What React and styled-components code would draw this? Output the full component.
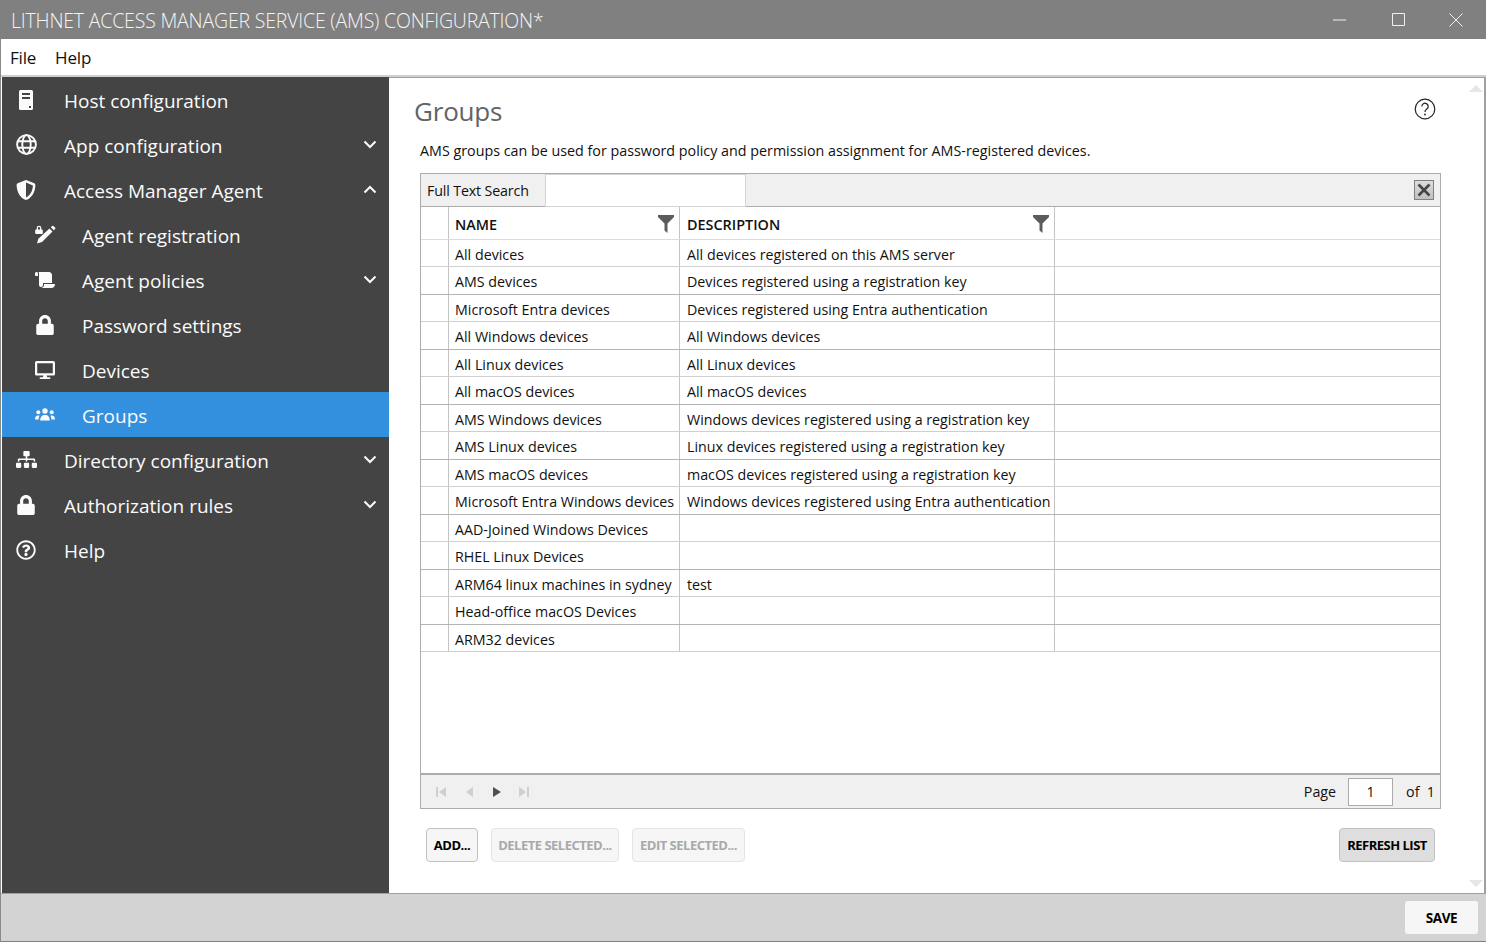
import React from "react";
import styled, { createGlobalStyle } from "styled-components";
import { FaShieldAlt, FaScroll, FaLock, FaDesktop, FaSitemap, FaRegQuestionCircle } from "react-icons/fa";

const GlobalStyle = createGlobalStyle`
    html, body {
        margin: 0;
        height: 100%;
        overflow: hidden;
        background: #fff;
        font-family: "Open Sans", "Noto Sans", sans-serif;
    }
    * { box-sizing: border-box; }
`;

const Window = styled.div`
    display: flex;
    flex-direction: column;
    width: 1486px;
    height: 942px;
    border-left: 1px solid #8a8a8a;
    border-bottom: 1px solid #808080;
`;

const TitleBar = styled.div`
    display: flex;
    align-items: center;
    height: 39px;
    margin-left: -1px;
    padding: 0 1px 0 11px;
    background: #808080;
    color: #f4f4f4;
    font-size: 19.5px;
    font-weight: 300;
    letter-spacing: -0.19px;
    white-space: nowrap;
`;

const TitleText = styled.span`
    flex: 1;
    padding-top: 2px;
`;

const WinButton = styled.div`
    display: flex;
    align-items: center;
    justify-content: center;
    width: 58px;
    height: 39px;
    svg { display: block; }
`;

const MenuBar = styled.div`
    display: flex;
    align-items: center;
    gap: 19px;
    height: 38px;
    padding-left: 9px;
    background: #fff;
    border-bottom: 2px solid #d0d0d0;
    font-size: 17px;
    letter-spacing: -0.2px;
    color: #111;
`;

const Body = styled.div`
    flex: 1;
    display: flex;
    min-height: 0;
`;

const Sidebar = styled.nav`
    width: 387px;
    margin-left: 1px;
    background: #444444;
    flex: none;
`;

const NavItem = styled.div`
    display: flex;
    align-items: center;
    height: 45px;
    padding-left: ${props => (props.$sub ? 19 : 0)}px;
    background: ${props => (props.$active ? "#3390df" : "transparent")};
    color: #fbfbfb;
    font-size: 19px;
`;

const NavIcon = styled.span`
    display: flex;
    align-items: center;
    justify-content: center;
    width: 48px;
    margin-right: ${props => (props.$sub ? 13 : 14)}px;
    font-size: ${props => props.$size || 20}px;
`;

const NavLabel = styled.span`
    flex: 1;
    padding-top: 2px;
`;

const Chevron = styled.svg`
    width: 14px;
    height: 9px;
    margin-right: 12px;
`;

const Panel = styled.main`
    flex: 1;
    position: relative;
    display: flex;
    flex-direction: column;
    padding: 0 43px 0 25px;
    background: #fff;
    border-top: 1px solid #a0a0a0;
    border-right: 2px solid #a0a0a0;
    min-width: 0;
`;

const ScrollArrow = styled.div`
    position: absolute;
    right: 1px;
    ${props => (props.$down ? "bottom: 6px;" : "top: 7px;")}
    width: 0;
    height: 0;
    border-left: 7px solid transparent;
    border-right: 7px solid transparent;
    ${props => (props.$down ? "border-top" : "border-bottom")}: 7px solid #e6e6e6;
`;

const HeaderRow = styled.div`
    display: flex;
    align-items: center;
    justify-content: space-between;
    height: 62px;
    padding-right: 5px;
`;

const Heading = styled.h1`
    margin: 4px 0 0;
    font-size: 26px;
    font-weight: 400;
    letter-spacing: -0.2px;
    color: #606468;
`;

const HelpIcon = styled.svg`
    width: 22px;
    height: 22px;
`;

const Intro = styled.p`
    margin: 0 0 12px 6px;
    height: 21px;
    line-height: 21px;
    font-size: 14.3px;
    color: #111;
    white-space: nowrap;
`;

const Grid = styled.div`
    margin-left: 6px;
    width: 1021px;
    height: 636px;
    display: flex;
    flex-direction: column;
    border: 1px solid #ababab;
    font-size: 14.25px;
    color: #111;
`;

const SearchBar = styled.div`
    display: flex;
    align-items: center;
    height: 33px;
    flex: none;
    background: #f0f0f0;
    border-bottom: 1px solid #ababab;
`;

const SearchLabel = styled.span`
    width: 124px;
    padding-left: 6px;
    letter-spacing: -0.15px;
`;

const SearchInput = styled.div`
    width: 201px;
    height: 33px;
    background: #fff;
    border: 1px solid #d4d4d4;
`;

const ClearButton = styled.button`
    display: flex;
    align-items: center;
    justify-content: center;
    width: 20px;
    height: 20px;
    padding: 0;
    margin-left: auto;
    margin-right: 6px;
    background: linear-gradient(#dcdcdc, #c0c0c0);
    border: 1px solid #808080;
`;

const Columns = styled.div`
    display: grid;
    grid-template-columns: 28px 231px 375px 1fr;
    flex: none;
    height: ${props => props.$height}px;
    border-bottom: 1px solid ${props => props.$line};
`;

const Cell = styled.div`
    display: flex;
    align-items: center;
    padding: 2px 0 0 6px;
    border-right: 1px solid #c4c4c4;
    white-space: nowrap;
    overflow: hidden;
    &:nth-child(3) { padding-left: 7px; }
    &:last-child { border-right: 0; }
`;

const HeadCell = styled(Cell)`
    justify-content: space-between;
    padding-right: 5px;
    font-size: 14.4px;
    font-weight: 600;
`;

const Rows = styled.div`
    flex: 1;
    min-height: 0;
`;

const Pager = styled.div`
    display: flex;
    align-items: center;
    height: 35px;
    flex: none;
    padding-left: 14px;
    background: #f0f0f0;
    border-top: 2px solid #ababab;
`;

const PagerIcons = styled.div`
    display: flex;
    gap: 13.5px;
    flex: 1;
`;

const PagerIcon = styled.svg`
    display: block;
    width: 14px;
    height: 12px;
`;

const PageInput = styled.div`
    display: flex;
    align-items: center;
    justify-content: center;
    width: 45px;
    height: 28px;
    margin: 0 13px 0 12px;
    background: #fff;
    border: 1px solid #ababab;
`;

const PagerText = styled.span`
    margin-right: ${props => props.$right || 0}px;
`;

const Actions = styled.div`
    display: flex;
    gap: 13px;
    margin: 19px 0 0 12px;
    width: 1009px;
`;

const Action = styled.button`
    height: 34px;
    width: ${props => props.$width}px;
    padding: 0;
    margin-left: ${props => (props.$push ? "auto" : 0)};
    background: ${props => (props.$filled ? "#dedede" : "#f6f6f6")};
    border: 1px solid ${props => (props.$disabled ? "#e4e4e4" : "#c2c2c2")};
    border-radius: 4px;
    color: ${props => (props.$disabled ? "#a9a9a9" : "#000")};
    font-family: inherit;
    font-size: 13px;
    font-weight: 700;
    letter-spacing: -0.5px;
`;

const Footer = styled.div`
    display: flex;
    align-items: center;
    justify-content: flex-end;
    height: 48px;
    flex: none;
    padding-right: 8px;
    background: #d3d3d3;
    border-top: 1px solid #a0a0a0;
`;

const SaveButton = styled.button`
    width: 73px;
    height: 33px;
    padding: 0;
    background: #f6f6f6;
    border: 0;
    border-radius: 3px;
    color: #000;
    font-family: inherit;
    font-size: 13.5px;
    font-weight: 700;
    letter-spacing: -0.4px;
`;

const ServerIcon = () => (
    <svg width="14" height="20" viewBox="0 0 14 20">
        <path fill="#fbfbfb" fillRule="evenodd" d="M1.5 0h11A1.5 1.5 0 0 1 14 1.5v17a1.5 1.5 0 0 1-1.5 1.5h-11A1.5 1.5 0 0 1 0 18.5v-17A1.5 1.5 0 0 1 1.5 0zM3 3v2h8V3H3zm0 4v2h8V7H3zm7 9v2h2v-2h-2z" />
    </svg>
);

const GlobeIcon = () => (
    <svg width="21" height="21" viewBox="0 0 21 21" fill="none" stroke="#fbfbfb" strokeWidth="1.900">
        <circle cx="10.500" cy="10.500" r="9.400" />
        <ellipse cx="10.500" cy="10.500" rx="4.200" ry="9.400" />
        <path d="M1.800 7.300h17.400M1.800 13.700h17.400" />
    </svg>
);

const PenLockIcon = () => (
    <svg width="21" height="19" viewBox="0 0 21 19">
        <path fill="#fbfbfb" d="M14.5 3.5l3 3L7 17l-5 1.500 1.300-4.800zM15.800 2.200l1.300-1.200a1 1 0 0 1 1.400 0l1.600 1.600a1 1 0 0 1 0 1.400L18.800 5.200z" />
        <path fill="#fbfbfb" fillRule="evenodd" d="M1 4.500h.700V3a2.300 2.300 0 0 1 4.600 0v1.500H7a.8.8 0 0 1 .8.800v3a.8.8 0 0 1-.8.8H1a.8.8 0 0 1-.8-.8v-3a.8.8 0 0 1 .8-.8zM3 4.500h2V3a1 1 0 0 0-2 0z" />
    </svg>
);

const GroupIcon = () => (
    <svg width="20" height="13" viewBox="0 0 20 13" fill="#fbfbfb">
        <circle cx="10" cy="3" r="2.700" />
        <circle cx="3.300" cy="4.300" r="2" />
        <circle cx="16.700" cy="4.300" r="2" />
        <path d="M5.200 12.500c0-3.500 1.800-5.500 4.800-5.500s4.800 2 4.800 5.500zM0 11.500c0-2.400 1.100-4 3.300-4 .5 0 .9.100 1.300.3-.7 1-1 2.300-1 3.700zM20 11.500c0-2.400-1.100-4-3.300-4-.5 0-.9.100-1.300.3.7 1 1 2.300 1 3.700z" />
    </svg>
);

const FilterIcon = () => (
    <svg width="16" height="18" viewBox="0 0 16 18">
        <path fill="#5c5c5c" d="M0 0h16v2L9.500 8.500V18l-3-2.500V8.500L0 2z" />
    </svg>
);

const Down = () => (
    <Chevron viewBox="0 0 14 9">
        <path d="M1.500 1.500L7 7l5.500-5.500" fill="none" stroke="#fbfbfb" strokeWidth="2" />
    </Chevron>
);

const Up = () => (
    <Chevron viewBox="0 0 14 9">
        <path d="M1.500 7.500L7 2l5.500 5.500" fill="none" stroke="#fbfbfb" strokeWidth="2" />
    </Chevron>
);

const navItems = [
    { label: "Host configuration", icon: <ServerIcon /> },
    { label: "App configuration", icon: <GlobeIcon />, arrow: "down" },
    { label: "Access Manager Agent", icon: <FaShieldAlt />, size: 20, arrow: "up" },
    { label: "Agent registration", icon: <PenLockIcon />, sub: true },
    { label: "Agent policies", icon: <FaScroll />, size: 20, sub: true, arrow: "down" },
    { label: "Password settings", icon: <FaLock />, size: 20, sub: true },
    { label: "Devices", icon: <FaDesktop />, size: 20, sub: true },
    { label: "Groups", icon: <GroupIcon />, sub: true, active: true },
    { label: "Directory configuration", icon: <FaSitemap />, size: 21, arrow: "down" },
    { label: "Authorization rules", icon: <FaLock />, size: 20, arrow: "down" },
    { label: "Help", icon: <FaRegQuestionCircle />, size: 20 },
];

const groups = [
    ["All devices", "All devices registered on this AMS server"],
    ["AMS devices", "Devices registered using a registration key"],
    ["Microsoft Entra devices", "Devices registered using Entra authentication"],
    ["All Windows devices", "All Windows devices"],
    ["All Linux devices", "All Linux devices"],
    ["All macOS devices", "All macOS devices"],
    ["AMS Windows devices", "Windows devices registered using a registration key"],
    ["AMS Linux devices", "Linux devices registered using a registration key"],
    ["AMS macOS devices", "macOS devices registered using a registration key"],
    ["Microsoft Entra Windows devices", "Windows devices registered using Entra authentication"],
    ["AAD-Joined Windows Devices", ""],
    ["RHEL Linux Devices", ""],
    ["ARM64 linux machines in sydney", "test"],
    ["Head-office macOS Devices", ""],
    ["ARM32 devices", ""],
];

function App() {
    return (
        <Window>
            <GlobalStyle />
            <TitleBar>
                <TitleText>LITHNET ACCESS MANAGER SERVICE (AMS) CONFIGURATION*</TitleText>
                <WinButton>
                    <svg width="14" height="2" viewBox="0 0 14 2"><path d="M0 1h13" stroke="#f0f0f0" /></svg>
                </WinButton>
                <WinButton>
                    <svg width="13" height="13" viewBox="0 0 13 13"><path d="M.5.5h12v12H.5z" fill="none" stroke="#f0f0f0" /></svg>
                </WinButton>
                <WinButton>
                    <svg width="14" height="14" viewBox="0 0 14 14"><path d="M.5.5l13 13M13.500.5l-13 13" fill="none" stroke="#f0f0f0" /></svg>
                </WinButton>
            </TitleBar>
            <MenuBar>
                <span>File</span>
                <span>Help</span>
            </MenuBar>
            <Body>
                <Sidebar>
                    {navItems.map(item => (
                        <NavItem key={item.label} $sub={item.sub} $active={item.active}>
                            <NavIcon $sub={item.sub} $size={item.size}>{item.icon}</NavIcon>
                            <NavLabel>{item.label}</NavLabel>
                            {item.arrow === "down" && <Down />}
                            {item.arrow === "up" && <Up />}
                        </NavItem>
                    ))}
                </Sidebar>
                <Panel>
                    <ScrollArrow />
                    <ScrollArrow $down />
                    <HeaderRow>
                        <Heading>Groups</Heading>
                        <HelpIcon viewBox="0 0 22 22">
                            <circle cx="11" cy="11" r="9.800" fill="none" stroke="#222" strokeWidth="1.200" />
                            <path d="M7.800 8.500a3.200 3.200 0 1 1 5 2.600c-1.200.8-1.800 1.400-1.800 2.900" fill="none" stroke="#222" strokeWidth="1.200" />
                            <circle cx="11" cy="16.500" r=".9" fill="#222" />
                        </HelpIcon>
                    </HeaderRow>
                    <Intro>AMS groups can be used for password policy and permission assignment for AMS-registered devices.</Intro>
                    <Grid>
                        <SearchBar>
                            <SearchLabel>Full Text Search</SearchLabel>
                            <SearchInput />
                            <ClearButton aria-label="Clear">
                                <svg width="14" height="14" viewBox="0 0 14 14">
                                    <path d="M1.500 1.500l11 11M12.500 1.500l-11 11" stroke="#444" strokeWidth="2.600" />
                                </svg>
                            </ClearButton>
                        </SearchBar>
                        <Columns $height={33} $line="#dcdcdc">
                            <Cell />
                            <HeadCell>NAME<FilterIcon /></HeadCell>
                            <HeadCell>DESCRIPTION<FilterIcon /></HeadCell>
                            <Cell />
                        </Columns>
                        <Rows>
                            {groups.map(([name, description], i) => (
                                <Columns key={name} $height={i % 2 ? 28 : 27} $line={i % 2 ? "#b4b4b4" : "#cfcfcf"}>
                                    <Cell />
                                    <Cell>{name}</Cell>
                                    <Cell>{description}</Cell>
                                    <Cell />
                                </Columns>
                            ))}
                        </Rows>
                        <Pager>
                            <PagerIcons>
                                <PagerIcon viewBox="0 0 14 12"><path fill="#cfcfcf" d="M1 1h2v10H1zM11 1v10L4 6z" /></PagerIcon>
                                <PagerIcon viewBox="0 0 14 12"><path fill="#cfcfcf" d="M10 1v10L3 6z" /></PagerIcon>
                                <PagerIcon viewBox="0 0 14 12"><path fill="#505050" d="M3 1v10l8-5z" /></PagerIcon>
                                <PagerIcon viewBox="0 0 14 12"><path fill="#cfcfcf" d="M1 1v10l7-5zM9 1h2v10H9z" /></PagerIcon>
                            </PagerIcons>
                            <PagerText>Page</PagerText>
                            <PageInput>1</PageInput>
                            <PagerText $right={5}>of&nbsp; 1</PagerText>
                        </Pager>
                    </Grid>
                    <Actions>
                        <Action $width={52}>ADD...</Action>
                        <Action $width={128} $disabled>DELETE SELECTED...</Action>
                        <Action $width={113} $disabled>EDIT SELECTED...</Action>
                        <Action $width={96} $push $filled>REFRESH LIST</Action>
                    </Actions>
                </Panel>
            </Body>
            <Footer>
                <SaveButton>SAVE</SaveButton>
            </Footer>
        </Window>
    );
}

export default App;
